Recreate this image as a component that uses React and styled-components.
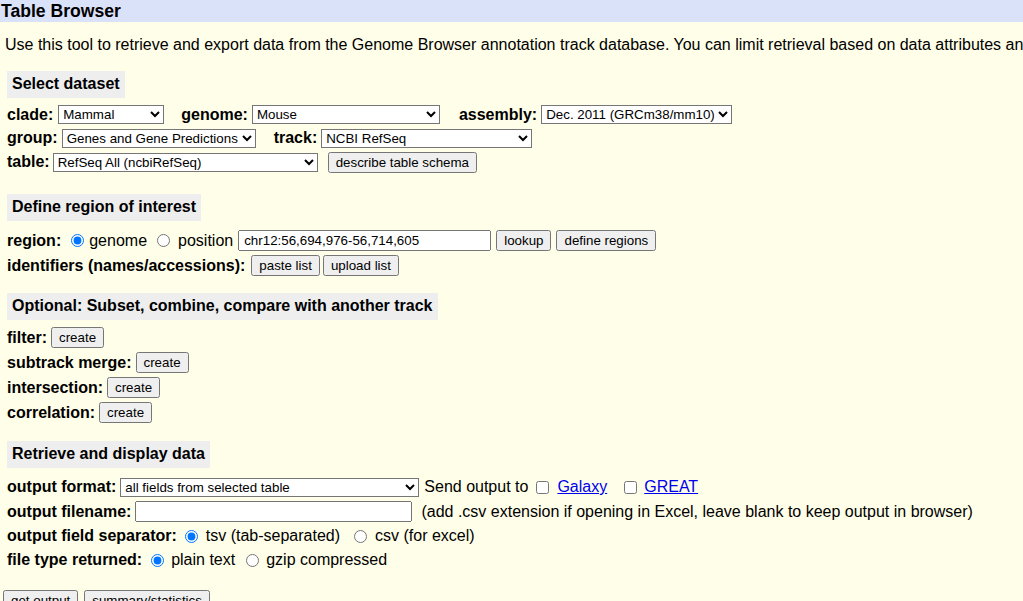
import React from "react";
import styled, { createGlobalStyle } from "styled-components";

const Global = createGlobalStyle`
  html, body { margin: 0; padding: 0; }
  body {
    background: #fffee8;
    font-family: "Liberation Sans", Arial, sans-serif;
    font-size: 16px;
    color: #000;
    overflow: hidden;
  }
`;

const Page = styled.div`
  width: 1023px;
  height: 601px;
  overflow: hidden;
  background: #fffee8;
`;

const Header = styled.div`
  height: 22px;
  background: #d9e2f8;
  font-weight: bold;
  font-size: 17.6px;
  line-height: 22px;
  padding-left: 1px;
  white-space: nowrap;
`;

const Intro = styled.div`
  margin: 14px 0 0 5px;
  white-space: nowrap;
  line-height: 18px;
`;

const Body = styled.div`
  padding-left: 7px;
`;

const Section = styled.section`
  margin-top: ${(p) => p.$top}px;
`;

const SectionTitle = styled.div`
  display: inline-block;
  background: #eeeeee;
  font-weight: bold;
  padding: 4px 5px 5px;
  line-height: 18px;
  margin-bottom: ${(p) => p.$after}px;
`;

const Row = styled.div`
  display: flex;
  align-items: center;
  height: ${(p) => p.$h}px;
  white-space: nowrap;
`;

const Label = styled.b`
  font-weight: bold;
  margin-left: ${(p) => p.$ml || 0}px;
  margin-right: ${(p) => (p.$mr === undefined ? 5 : p.$mr)}px;
`;

const Select = styled.select`
  font-family: "Liberation Sans", Arial, sans-serif;
  font-size: 13.33px;
  width: ${(p) => p.$w}px;
  height: 19px;
  margin: 0;
  margin-left: ${(p) => p.$ml || 0}px;
  color: #000;
  background: #fff;
`;

const Button = styled.button`
  font-family: "Liberation Sans", Arial, sans-serif;
  font-size: 13.33px;
  margin: 0;
  margin-left: ${(p) => p.$ml || 0}px;
  height: 21px;
  padding: 1px 6px;
  color: #000;
`;

const TextInput = styled.input`
  font-family: "Liberation Sans", Arial, sans-serif;
  font-size: 13.33px;
  width: ${(p) => p.$w}px;
  height: 21px;
  box-sizing: border-box;
  margin: 0;
  margin-left: ${(p) => p.$ml || 0}px;
  padding: 1px 4px;
`;

const Radio = styled.input.attrs({ type: "radio" })`
  margin: 0 5px 0 ${(p) => p.$ml || 5}px;
  width: 13px;
  height: 13px;
`;

const Check = styled.input.attrs({ type: "checkbox" })`
  margin: 0 ${(p) => p.$mr || 8}px 0 ${(p) => p.$ml || 9}px;
  width: 13px;
  height: 13px;
`;

const Text = styled.span`
  margin-left: ${(p) => p.$ml || 0}px;
`;

const Link = styled.a`
  color: #0000ee;
  text-decoration: underline;
  margin-left: ${(p) => p.$ml || 0}px;
`;

const Footer = styled.div`
  display: flex;
  gap: 6px;
  margin: 18px 0 0 3px;
`;

export default function App() {
  return (
    <Page>
      <Global />
      <Header>Table Browser</Header>
      <Intro>
        Use this tool to retrieve and export data from the Genome Browser annotation track database. You can limit retrieval based on data attributes and intersect or merge with data from another track, or retrieve DNA sequence covered by a track.
      </Intro>
      <Body>
        <Section $top={17}>
          <SectionTitle $after={5}>Select dataset</SectionTitle>
          <Row $h={23}>
            <Label>clade:</Label>
            <Select $w={106} defaultValue="Mammal">
              <option>Mammal</option>
            </Select>
            <Label $ml={17} $mr={4}>genome:</Label>
            <Select $w={188} defaultValue="Mouse">
              <option>Mouse</option>
            </Select>
            <Label $ml={19} $mr={4}>assembly:</Label>
            <Select $w={191}>
              <option>Dec. 2011 (GRCm38/mm10)</option>
            </Select>
          </Row>
          <Row $h={24}>
            <Label $mr={4}>group:</Label>
            <Select $w={194}>
              <option>Genes and Gene Predictions</option>
            </Select>
            <Label $ml={18} $mr={4}>track:</Label>
            <Select $w={211}>
              <option>NCBI RefSeq</option>
            </Select>
          </Row>
          <Row $h={24}>
            <Label $mr={3}>table:</Label>
            <Select $w={265}>
              <option>RefSeq All (ncbiRefSeq)</option>
            </Select>
            <Button $ml={10}>describe table schema</Button>
          </Row>
        </Section>

        <Section $top={20}>
          <SectionTitle $after={7}>Define region of interest</SectionTitle>
          <Row $h={25}>
            <Label $mr={0}>region:</Label>
            <Radio name="region" defaultChecked $ml={10} />
            <Text>genome</Text>
            <Radio name="region" $ml={10} />
            <Text $ml={3}>position</Text>
            <TextInput $w={253} $ml={5} defaultValue="chr12:56,694,976-56,714,605" />
            <Button $ml={5}>lookup</Button>
            <Button $ml={5}>define regions</Button>
          </Row>
          <Row $h={25}>
            <Label>identifiers (names/accessions):</Label>
            <Button $ml={1}>paste list</Button>
            <Button $ml={3}>upload list</Button>
          </Row>
        </Section>

        <Section $top={15}>
          <SectionTitle $after={5}>Optional: Subset, combine, compare with another track</SectionTitle>
          <Row $h={25}>
            <Label $mr={4}>filter:</Label>
            <Button>create</Button>
          </Row>
          <Row $h={25}>
            <Label $mr={4}>subtrack merge:</Label>
            <Button>create</Button>
          </Row>
          <Row $h={25}>
            <Label $mr={4}>intersection:</Label>
            <Button>create</Button>
          </Row>
          <Row $h={25}>
            <Label $mr={4}>correlation:</Label>
            <Button>create</Button>
          </Row>
        </Section>

        <Section $top={16}>
          <SectionTitle $after={7}>Retrieve and display data</SectionTitle>
          <Row $h={24}>
            <Label $mr={4}>output format:</Label>
            <Select $w={299}>
              <option>all fields from selected table</option>
            </Select>
            <Text $ml={5}>Send output to</Text>
            <Check $ml={8} $mr={8} />
            <Link href="#">Galaxy</Link>
            <Check $ml={17} $mr={7} />
            <Link href="#">GREAT</Link>
          </Row>
          <Row $h={25}>
            <Label $mr={4}>output filename:</Label>
            <TextInput $w={277} />
            <Text $ml={9}>(add .csv extension if opening in Excel, leave blank to keep output in browser)</Text>
          </Row>
          <Row $h={24}>
            <Label $mr={0}>output field separator:</Label>
            <Radio name="sep" defaultChecked $ml={8} />
            <Text $ml={3}>tsv (tab-separated)</Text>
            <Radio name="sep" $ml={14} />
            <Text $ml={3}>csv (for excel)</Text>
          </Row>
          <Row $h={24}>
            <Label $mr={0}>file type returned:</Label>
            <Radio name="ft" defaultChecked $ml={9} />
            <Text $ml={2}>plain text</Text>
            <Radio name="ft" $ml={11} />
            <Text $ml={2}>gzip compressed</Text>
          </Row>
        </Section>
      </Body>
      <Footer>
        <Button>get output</Button>
        <Button>summary/statistics</Button>
      </Footer>
    </Page>
  );
}
